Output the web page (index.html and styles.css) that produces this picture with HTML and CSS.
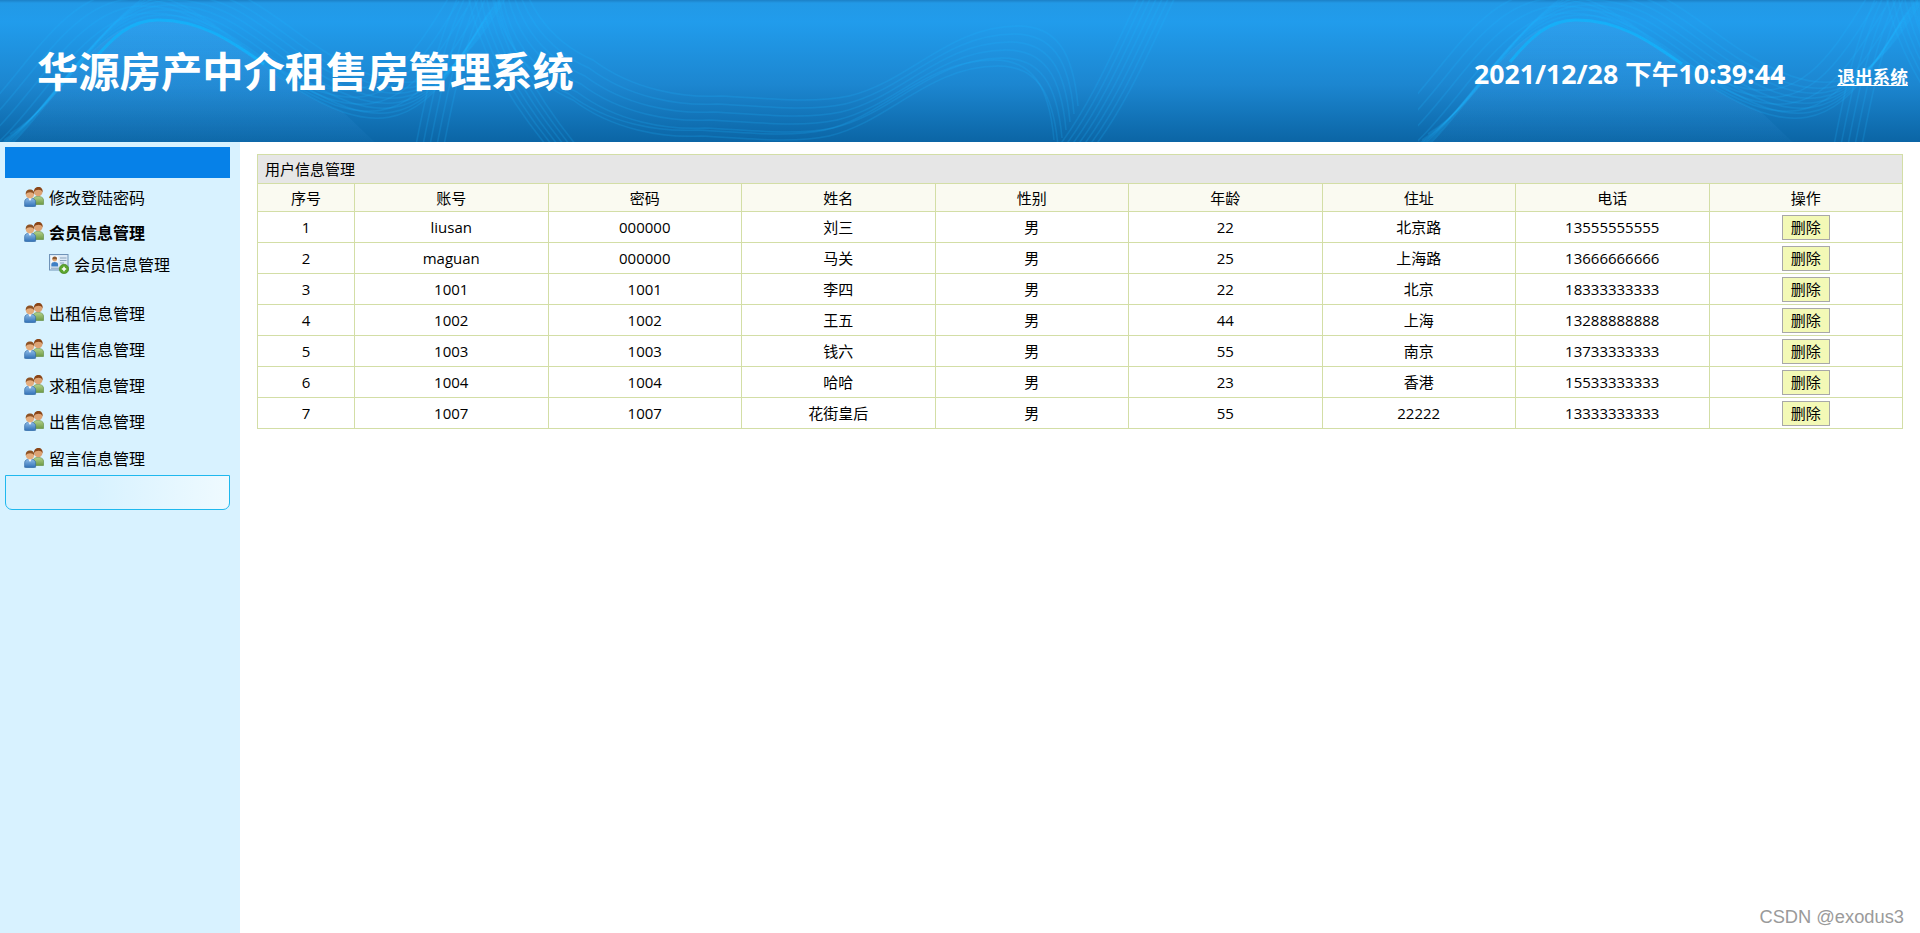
FILE: index.html
```
<!DOCTYPE html>
<html lang="zh-CN">
<head>
<meta charset="utf-8">
<title>华源房产中介租售房管理系统</title>
<link rel="stylesheet" href="styles.css">
</head>
<body>
<svg class="defs" width="0" height="0" aria-hidden="true">
  <defs>
    <linearGradient id="manBlue" x1="0" y1="0" x2="0" y2="1"><stop offset="0" stop-color="#8fbde8"/><stop offset="1" stop-color="#2f6fb5"/></linearGradient>
    <linearGradient id="manGreen" x1="0" y1="0" x2="0" y2="1"><stop offset="0" stop-color="#b5d28c"/><stop offset="1" stop-color="#6d9a45"/></linearGradient>
    <symbol id="people" viewBox="0 0 20 20">
      <path d="M9 17.500v-4.500c0-2.400 2-3.600 5-3.600s5.500 1.200 5.500 3.600v4.500z" fill="url(#manGreen)" stroke="#5f8a3c" stroke-width=".6"/>
      <circle cx="14.300" cy="5" r="4.200" fill="#dca273"/>
      <path d="M10 5.200C9.700 1.900 11.800 0 14.500 0s4.500 1.900 4.100 5.400c-.6-1.900-2-2.600-4-2.600-2.100 0-3.800.7-4.600 2.400z" fill="#8a4517"/>
      <path d="M.6 19.300v-4.600c0-2.500 2.200-3.700 5.400-3.700s5.600 1.200 5.600 3.700v4.600c-3.500.7-7.500.7-11 0z" fill="url(#manBlue)" stroke="#2c659f" stroke-width=".6"/>
      <path d="M4.300 11h3.400L6 14z" fill="#fff"/>
      <circle cx="6" cy="7.300" r="4.100" fill="#e3ac7d"/>
      <path d="M1.800 7.500C1.400 4.200 3.300 2.400 6 2.400s4.700 1.800 4.200 5.200c-.7-1.700-2.200-2.400-4.100-2.400-2.100 0-3.500.7-4.300 2.300z" fill="#8d5224"/>
    </symbol>
    <symbol id="card" viewBox="0 0 20 20">
      <rect x=".5" y=".5" width="18.500" height="15.500" fill="#dbe9f6" stroke="#6f93b8"/>
      <rect x="2" y="2" width="7.500" height="10.500" fill="#f4f8fc"/>
      <circle cx="5.700" cy="5.300" r="2.300" fill="#e0a877"/>
      <path d="M5.700 2.600c-1.700 0-2.500 1.100-2.300 2.700h4.600c.2-1.600-.6-2.700-2.300-2.700z" fill="#8d5a30"/>
      <path d="M2.300 12.500v-2c0-1.700 1.600-2.400 3.400-2.400s3.400.7 3.400 2.400v2z" fill="#3f7fc4"/>
      <path d="M11 4h6.500M11 6.500h6.500M11 9h4M2 14.200h8" stroke="#8aa3bc" fill="none"/>
      <circle cx="15" cy="15" r="4.700" fill="#5ba52c" stroke="#3f7f1a" stroke-width=".6"/>
      <path d="M12.800 15h4.400M15 12.800v4.400" stroke="#fff" stroke-width="1.500" fill="none"/>
    </symbol>
  </defs>
</svg>

<header class="top">
  <svg class="waves" width="100%" height="142" aria-hidden="true">
    <defs>
      <path id="a" d="M-20 170C45 130 85 20 158 20c75 0 105 62 185 92 70 24 100-25 140-90"/>
      <path id="b" d="M497-5c5 45 30 85 76 105 40 30 90 38 128 36 45 2 90 8 128 0 60-14 100-70 169-70 38 0 55 25 60 80"/>
      <path id="c" d="M1056 150c35-45 60-105 84-155"/>
      <path id="d" d="M415 150c10-50 20-105 44-155"/>
      <path id="e" d="M498-5c10 55 45 110 82 155"/>
      <linearGradient id="humpFill" x1="0" y1="0" x2="0" y2="1"><stop offset="0" stop-color="#4aa6ee" stop-opacity=".28"/><stop offset="1" stop-color="#4aa6ee" stop-opacity="0"/></linearGradient>
      <g id="tile">
        <path class="hump" d="M-20 170C45 130 85 20 158 20c75 0 105 62 185 92l40 38z"/>
        <path class="main" d="M92 62c20-24 38-42 66-42 42 0 72 20 106 44"/>
        <use href="#a"/>
        <use href="#a" transform="translate(3 -5)"/><use href="#a" transform="translate(6 -10)"/><use href="#a" transform="translate(10 -15)"/><use href="#a" transform="translate(14 -20)"/><use href="#a" transform="translate(19 -25)"/><use href="#a" transform="translate(24 -30)"/><use href="#a" transform="translate(30 -36)"/><use href="#a" transform="translate(-8 -7)"/><use href="#a" transform="translate(-16 -14)"/><use href="#a" transform="translate(-24 -21)"/><use href="#a" transform="translate(-32 -28)"/>
        <use href="#b"/><use href="#b" transform="translate(4 -8)"/><use href="#b" transform="translate(8 -16)"/><use href="#b" transform="translate(12 -24)"/><use href="#b" transform="translate(16 -32)"/><use href="#b" transform="translate(20 -40)"/><use href="#b" transform="translate(-4 -6)"/>
        <use href="#c"/><use href="#c" transform="translate(6)"/><use href="#c" transform="translate(12)"/><use href="#c" transform="translate(18)"/><use href="#c" transform="translate(24)"/><use href="#c" transform="translate(30)"/><use href="#c" transform="translate(36)"/>
        <use href="#d"/><use href="#d" transform="translate(7)"/><use href="#d" transform="translate(14)"/><use href="#d" transform="translate(21)"/><use href="#d" transform="translate(28)"/>
        <use href="#e"/><use href="#e" transform="translate(-6)"/><use href="#e" transform="translate(-12)"/><use href="#e" transform="translate(-18)"/><use href="#e" transform="translate(-24)"/><use href="#e" transform="translate(-30)"/>
      </g>
      <pattern id="waveTile" width="1418" height="142" patternUnits="userSpaceOnUse"><use href="#tile" class="lines"/></pattern>
    </defs>
    <rect width="100%" height="142" fill="url(#waveTile)"/>
  </svg>
  <h1 class="brand">华源房产中介租售房管理系统</h1>
  <div class="clock">2021/12/28 下午10:39:44</div>
  <a class="logout" href="#">退出系统</a>
</header>

<div class="layout">
  <aside class="side">
    <div class="side-head"></div>
    <ul class="menu">
      <li class="item"><svg class="ico"><use href="#people"/></svg>修改登陆密码</li>
      <li class="item open"><svg class="ico"><use href="#people"/></svg>会员信息管理</li>
      <li class="sub"><svg class="ico"><use href="#card"/></svg>会员信息管理</li>
      <li class="item after-sub"><svg class="ico"><use href="#people"/></svg>出租信息管理</li>
      <li class="item"><svg class="ico"><use href="#people"/></svg>出售信息管理</li>
      <li class="item"><svg class="ico"><use href="#people"/></svg>求租信息管理</li>
      <li class="item"><svg class="ico"><use href="#people"/></svg>出售信息管理</li>
      <li class="item"><svg class="ico"><use href="#people"/></svg>留言信息管理</li>
    </ul>
    <div class="side-foot"></div>
  </aside>

  <main class="content">
    <table class="grid">
      <colgroup><col class="col-no"><col span="8"></colgroup>
      <thead>
        <tr class="cap"><th colspan="9">用户信息管理</th></tr>
        <tr class="heads"><th>序号</th><th>账号</th><th>密码</th><th>姓名</th><th>性别</th><th>年龄</th><th>住址</th><th>电话</th><th>操作</th></tr>
      </thead>
      <tbody>
        <tr><td>1</td><td>liusan</td><td>000000</td><td>刘三</td><td>男</td><td>22</td><td>北京路</td><td>13555555555</td><td><button class="del" type="button">删除</button></td></tr>
        <tr><td>2</td><td>maguan</td><td>000000</td><td>马关</td><td>男</td><td>25</td><td>上海路</td><td>13666666666</td><td><button class="del" type="button">删除</button></td></tr>
        <tr><td>3</td><td>1001</td><td>1001</td><td>李四</td><td>男</td><td>22</td><td>北京</td><td>18333333333</td><td><button class="del" type="button">删除</button></td></tr>
        <tr><td>4</td><td>1002</td><td>1002</td><td>王五</td><td>男</td><td>44</td><td>上海</td><td>13288888888</td><td><button class="del" type="button">删除</button></td></tr>
        <tr><td>5</td><td>1003</td><td>1003</td><td>钱六</td><td>男</td><td>55</td><td>南京</td><td>13733333333</td><td><button class="del" type="button">删除</button></td></tr>
        <tr><td>6</td><td>1004</td><td>1004</td><td>哈哈</td><td>男</td><td>23</td><td>香港</td><td>15533333333</td><td><button class="del" type="button">删除</button></td></tr>
        <tr><td>7</td><td>1007</td><td>1007</td><td>花街皇后</td><td>男</td><td>55</td><td>22222</td><td>13333333333</td><td><button class="del" type="button">删除</button></td></tr>
      </tbody>
    </table>
  </main>
</div>
<div class="mark">CSDN @exodus3</div>
</body>
</html>
```

FILE: styles.css
```
* { box-sizing: border-box; }
html, body { margin: 0; height: 100%; }
body {
  display: flex;
  flex-direction: column;
  height: 933px;
  overflow: hidden;
  position: relative;
  background: #fff;
  color: #000;
  font-family: "Open Sans", "Noto Sans CJK SC", sans-serif;
}
.defs { position: absolute; }

.top {
  position: relative;
  flex: 0 0 142px;
  display: flex;
  align-items: center;
  padding: 0 12px 0 37px;
  color: #fff;
  background: linear-gradient(#1c80c6 0, #2299e6 3px, #219cec 22px, #1c86d0 85px, #0b65a5 142px);
}
.waves { position: absolute; left: 0; top: 0; }
.lines { fill: none; stroke: #1ab4ff; stroke-width: 1.5; stroke-opacity: .2; }
.main { stroke: #0fb4fb; stroke-width: 3; stroke-opacity: .75; }
.hump { fill: url(#humpFill); stroke: none; }
.brand {
  position: relative;
  margin: 0 auto 0 0;
  font-size: 41.3px;
  font-weight: 700;
  line-height: 50px;
}
.clock {
  position: relative;
  font-size: 26.7px;
  font-weight: 700;
  line-height: 34px;
  margin: 5px 52px 0 0;
  white-space: nowrap;
}
.logout {
  position: relative;
  color: #fff;
  font-size: 17.7px;
  font-weight: 700;
  line-height: 24px;
  margin-top: 11px;
}

.layout { flex: 1; display: flex; min-height: 0; }
.side {
  flex: 0 0 240px;
  background: #d8f2ff;
  padding: 5px 10px 0 5px;
}
.side-head { height: 31px; background: #0681e8; }
.menu { list-style: none; margin: 0; padding: 1px 0 0 19px; font-size: 16px; }
.item, .sub { display: flex; align-items: center; white-space: nowrap; }
.item { height: 36.25px; padding-bottom: 1px; }
.ico { width: 20px; height: 20px; margin-right: 5px; flex: none; }
.open { font-weight: 700; padding-bottom: 3px; }
.sub { height: 27px; padding: 0 0 3px 25px; }
.after-sub { margin-top: 16.5px; }
.side-foot {
  height: 35px;
  margin-top: -1px;
  border: 1px solid #1fb8ee;
  border-radius: 0 0 7px 7px;
  background: linear-gradient(90deg, #d8f2ff, #d8f2ff 40%, #effaff);
}

.content { flex: 1; min-width: 0; padding: 12px 17px 0 17px; }
.grid {
  width: 100%;
  border-collapse: collapse;
  table-layout: fixed;
  font-size: 15px;
  text-align: center;
}
.col-no { width: 97px; }
.grid th, .grid td {
  border: 1px solid #d3dea6;
  padding: 0;
  font-weight: 400;
  line-height: 20px;
}
.cap th { height: 29px; background: #e6e6e6; text-align: left; padding-left: 7px; }
.heads th { height: 28px; background: #fafaf1; }
.grid td { height: 31px; }
.del {
  display: block;
  width: 48px;
  height: 25px;
  margin: 0 auto;
  padding: 0;
  border: 1px solid #a8a8a8;
  background: #f3f9b6;
  color: #000;
  font: 15px/20px "Open Sans", "Noto Sans CJK SC", sans-serif;
}
.mark {
  position: absolute;
  right: 16px;
  bottom: 7px;
  font: 18.300px/18px "Liberation Sans", sans-serif;
  color: #9a9a9a;
}
```
